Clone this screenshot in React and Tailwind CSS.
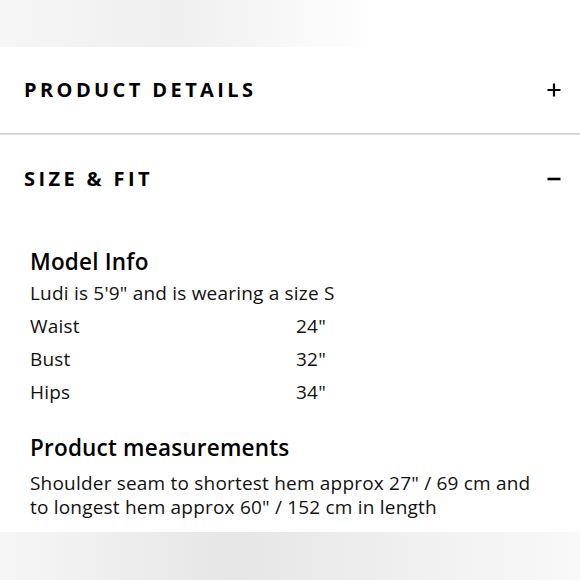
export default function App() {
  const rows = [
    ["Waist", '24"'],
    ["Bust", '32"'],
    ["Hips", '34"'],
  ];

  return (
    <div
      className="w-[580px] h-[580px] overflow-hidden bg-white flex flex-col text-[#111]"
      style={{ fontFamily: '"Open Sans", "Noto Sans", sans-serif' }}
    >
      {/* blurred strip at top */}
      <div className="h-[47px] shrink-0 bg-linear-to-r from-[#f6f6f6] via-[#efefef] via-30% to-white to-65%" />

      {/* Product details (closed) */}
      <div className="h-[86px] shrink-0 flex items-center justify-between pl-[24px] pr-[18px]">
        <span className="text-[20px] font-bold tracking-[0.17em] text-black">PRODUCT DETAILS</span>
        <svg width="16" height="16" viewBox="0 0 16 16" className="text-black">
          <path d="M8 1.5v13M1.5 8h13" stroke="currentColor" strokeWidth="2.2" />
        </svg>
      </div>
      <div className="h-[2px] shrink-0 bg-linear-to-b from-[#c9c9c9] to-[#e8e8e8]" />

      {/* Size & fit (open) */}
      <div className="h-[88px] shrink-0 flex items-center justify-between pl-[24px] pr-[18px]">
        <span className="text-[20px] font-bold tracking-[0.17em] text-black">SIZE &amp; FIT</span>
        <svg width="16" height="16" viewBox="0 0 16 16" className="text-black">
          <path d="M1.5 8h13" stroke="currentColor" strokeWidth="2.6" />
        </svg>
      </div>

      <div className="flex-1 pl-[30px] pr-[30px] pt-[24px] tracking-[0.2px]">
        <h3 className="text-[22.5px] font-semibold leading-[30px] text-black">Model Info</h3>
        <p className="text-[19px] leading-[33px]">Ludi is 5'9" and is wearing a size S</p>
        {rows.map(([k, v]) => (
          <div key={k} className="flex text-[19px] leading-[33px]">
            <span className="w-[266px]">{k}</span>
            <span>{v}</span>
          </div>
        ))}

        <h3 className="mt-[24px] text-[22.5px] font-semibold leading-[30px] text-black">Product measurements</h3>
        <p className="text-[19px] leading-[24px] mt-[8px] whitespace-nowrap">
          Shoulder seam to shortest hem approx 27" / 69 cm and
          <br />
          to longest hem approx 60" / 152 cm in length
        </p>
      </div>

      {/* blurred strip at bottom */}
      <div className="h-[48px] shrink-0 bg-linear-to-r from-[#f6f6f6] via-[#e6e6e6] via-40% to-[#f9f9f9]" />
    </div>
  );
}
